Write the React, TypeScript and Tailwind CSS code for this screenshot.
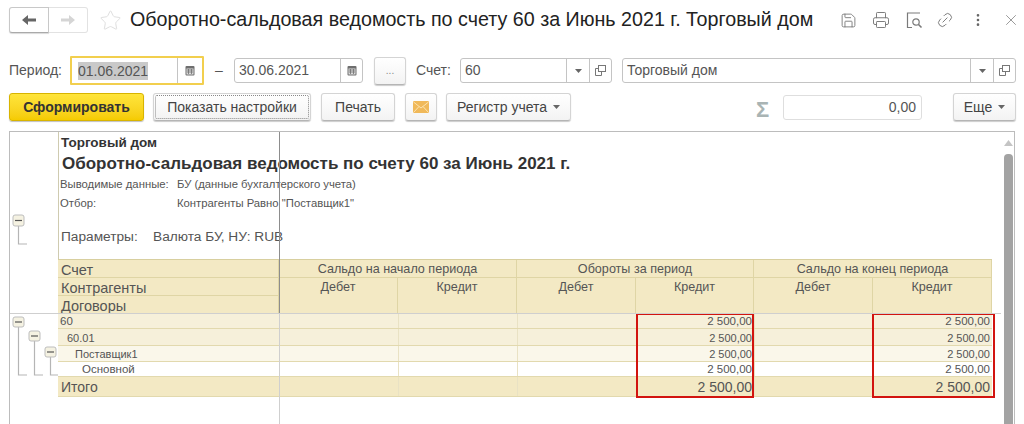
import { Link2, MoreVertical, Printer, Save, Star, X } from "lucide-react";
import type { ReactNode } from "react";

const font = "font-['Liberation_Sans',Arial,sans-serif]";

function Arrow({ left, color }: { left?: boolean; color: string }) {
  return (
    <svg width="16" height="12" viewBox="0 0 16 12" className={left ? "" : "rotate-180"}>
      <path d="M1 6 L7 1 V4.5 H15 V7.5 H7 V11 Z" fill={color} />
    </svg>
  );
}

function CalendarIcon() {
  return (
    <svg width="10" height="11" viewBox="0 0 10 11">
      <rect x="0.5" y="1" width="9" height="9.5" rx="1" fill="#6e6e6e" />
      <rect x="1.5" y="3.5" width="7" height="6" fill="#ddd" />
      <path d="M2 5H8M2 7H8M3.5 4V9M6.5 4V9" stroke="#6e6e6e" strokeWidth="0.8" />
    </svg>
  );
}

function CopyIcon() {
  return (
    <svg width="11" height="11" viewBox="0 0 11 11" fill="none" stroke="#777" strokeWidth="1">
      <rect x="3.5" y="0.5" width="7" height="6" fill="#fff" />
      <path d="M3.5 3.5H0.5V10.5H6.5V6.5" />
    </svg>
  );
}

function Caret({ color = "#666" }: { color?: string }) {
  return (
    <svg width="7" height="4" viewBox="0 0 7 4">
      <path d="M0 0H7L3.5 4Z" fill={color} />
    </svg>
  );
}

function Btn({ className = "", children }: { className?: string; children: ReactNode }) {
  return (
    <div
      className={`flex items-center justify-center h-[28px] rounded-[3px] border border-[#d4d4d4] border-b-[#b5b5b5] bg-gradient-to-b from-white to-[#f3f3f3] shadow-[0_1px_1px_rgba(0,0,0,0.2)] text-[14px] text-[#444] ${className}`}
    >
      {children}
    </div>
  );
}

function DateField({ value, selected, className = "" }: { value: string; selected?: boolean; className?: string }) {
  return (
    <div className={`flex items-stretch h-[25px] rounded-[3px] border border-[#c4c4c4] bg-white text-[14px] text-[#555] ${className}`}>
      <div className={`flex-1 flex items-center ${selected ? "pl-[6px]" : "pl-[4px]"}`}>
        <span className={selected ? "bg-[#c9c9c9] leading-[18px]" : ""}>{value}</span>
      </div>
      <div className={`${selected ? "w-[25px]" : "w-[22px]"} border-l border-[#c4c4c4] flex items-center justify-center`}>
        <CalendarIcon />
      </div>
    </div>
  );
}

function SelectField({ value, className = "" }: { value: string; className?: string }) {
  return (
    <div className={`flex items-stretch h-[25px] rounded-[3px] border border-[#c4c4c4] bg-white text-[14px] text-[#555] ${className}`}>
      <div className="flex-1 flex items-center pl-[4px]">{value}</div>
      <div className="w-[23px] border-l border-[#c4c4c4] flex items-center justify-center">
        <Caret />
      </div>
      <div className="w-[22px] border-l border-[#c4c4c4] flex items-center justify-center">
        <CopyIcon />
      </div>
    </div>
  );
}

function PreviewIcon() {
  return (
    <svg width="17" height="17" viewBox="0 0 17 17" fill="none" stroke="#7a7a7a" strokeWidth="1.2">
      <path d="M14 1H1.5V15.5H6" />
      <circle cx="10" cy="10" r="3.2" />
      <path d="M12.5 12.5L15.5 15.5" strokeWidth="1.6" />
    </svg>
  );
}

function TreeLines() {
  const boxes = [
    [12, 0],
    [28, 14],
    [44, 30],
  ];
  return (
    <svg width="48" height="292" viewBox="0 0 48 292" className="absolute left-0 top-0" fill="none">
      {/* координаты считаются от верхней границы отчета */}
      <path d="M8.5 94V112H17" stroke="#b5b5b5" strokeWidth="1.2" />
      <rect x="3" y="83" width="11" height="11" rx="2" fill="#f5f2e2" stroke="#bdbdbd" />
      <path d="M5 88.5H12" stroke="#555" strokeWidth="1.2" />
      {boxes.map(([x, y], i) => (
        <g key={x}>
          <path
            d={`M${x - 3.5} ${185 + y + 10}V243H${x + 5 + (i === 2 ? 3 : 0)}`}
            stroke="#b5b5b5"
            strokeWidth="1.2"
          />
          <rect x={x - 9} y={185 + y} width="11" height="10" rx="2" fill="#f5f2e2" stroke="#bdbdbd" />
          <path d={`M${x - 7} ${190 + y}H${x}`} stroke="#555" strokeWidth="1.2" />
        </g>
      ))}
    </svg>
  );
}

const rows = [
  { name: "60", h: "h-[15px]", bg: "bg-[#f6f0da]", pad: "pl-[2px]", size: "text-[11.5px]", top: "pt-[2px]" },
  { name: "60.01", h: "h-[17px]", bg: "bg-[#f6f0da]", pad: "pl-[9px]", size: "text-[11px]", top: "pt-[2px]" },
  { name: "Поставщик1", h: "h-[16px]", bg: "bg-[#faf7ea]", pad: "pl-[17px]", size: "text-[11px]", top: "pt-[1px]" },
  { name: "Основной", h: "h-[15px]", bg: "bg-white", pad: "pl-[24px]", size: "text-[11.5px]", top: "pt-[2px]" },
  { name: "Итого", h: "h-[20px]", bg: "bg-[#f3e9c4]", pad: "pl-[3px]", size: "text-[14px]", top: "pt-[1px]" },
];

const cols = "grid-cols-[221px_119px_119px_119px_118px_119px_119px]";
const hcell = "bg-[#f3e9c4] border-r border-b border-[#dfd5a5] text-[#555]";
const hlabel = `${hcell} pl-[3px] pt-[2px] text-[14.5px] flex items-center`;
const hgroup = `${hcell} col-span-2 pt-[1px] flex items-center justify-center`;

export default function App() {
  return (
    <div className={`${font} relative w-[1024px] h-[424px] overflow-hidden bg-white flex flex-col`}>
      {/* Заголовок окна */}
      <div className="flex items-center h-[26px] mt-[7px] pl-[9px] pr-[4px]">
        <div className="flex w-[79px] h-[26px]">
          <div className="w-[40px] flex items-center justify-center rounded-l-[3px] border border-[#c8c8c8] border-b-[#aaa] bg-white shadow-[0_1px_1px_rgba(0,0,0,0.15)]">
            <Arrow left color="#666" />
          </div>
          <div className="flex-1 flex items-center justify-center rounded-r-[3px] border border-l-0 border-[#e2e2e2] bg-white">
            <Arrow color="#d5d5d5" />
          </div>
        </div>
        <Star className="ml-[11px] text-[#dcdcdc]" size={23} strokeWidth={1} />
        <div className="ml-[8px] text-[19.7px] text-[#222] whitespace-nowrap leading-none">
          Оборотно-сальдовая ведомость по счету 60 за Июнь 2021 г. Торговый дом
        </div>
        <div className="ml-auto flex items-center text-[#7a7a7a]">
          <Save size={17} strokeWidth={1.3} />
          <Printer size={18} strokeWidth={1.3} className="ml-[15px]" />
          <div className="ml-[16px]">
            <PreviewIcon />
          </div>
          <Link2 size={18} strokeWidth={1.2} className="ml-[13px] -rotate-45" />
          <MoreVertical size={16} strokeWidth={2} className="ml-[16px] text-[#666]" />
          <X size={18} strokeWidth={1} className="ml-[16px]" />
        </div>
      </div>

      {/* Период и счет */}
      <div className="flex items-center mt-[23px] h-[29px] pl-[9px] text-[14px] text-[#555]">
        <span className="w-[61px]">Период:</span>
        <div className="w-[134px] h-[29px] border-2 border-[#f2cf4e] rounded-[1px] flex items-center">
          <DateField value="01.06.2021" selected className="w-full !h-[25px] !border-0" />
        </div>
        <span className="w-[30px] text-center">–</span>
        <DateField value="30.06.2021" className="w-[129px]" />
        <Btn className="ml-[11px] w-[32px] !text-[10px] !text-[#888]">...</Btn>
        <span className="ml-[10px] w-[44px]">Счет:</span>
        <SelectField value="60" className="w-[152px]" />
        <SelectField value="Торговый дом" className="ml-[10px] w-[394px]" />
      </div>

      {/* Командная панель */}
      <div className="flex items-center mt-[8px] h-[28px] pl-[9px] pr-[8px]">
        <div className="flex items-center justify-center w-[135px] h-[28px] rounded-[3px] border border-[#d8b400] bg-gradient-to-b from-[#ffe53a] to-[#f5cb00] shadow-[0_1px_1px_rgba(0,0,0,0.25)] text-[14px] font-bold text-[#333]">
          Сформировать
        </div>
        <Btn className="ml-[9px] w-[158px] p-[1px]">
          <div className="w-full h-full flex items-center justify-center border border-dotted border-[#888] rounded-[2px]">
            Показать настройки
          </div>
        </Btn>
        <Btn className="ml-[10px] w-[74px]">Печать</Btn>
        <Btn className="ml-[10px] w-[32px]">
          <svg width="16" height="12" viewBox="0 0 16 12">
            <rect width="16" height="12" rx="1" fill="#f0b95a" />
            <path d="M0.5 1L8 7L15.5 1M0.5 11.5L6 5.5M15.5 11.5L10 5.5" stroke="#fce3b0" strokeWidth="1" fill="none" />
          </svg>
        </Btn>
        <Btn className="ml-[9px] w-[125px] gap-[6px]">
          Регистр учета
          <Caret />
        </Btn>
        <span className="ml-[185px] w-[15px] pt-[5px] text-[22px] font-bold leading-none text-[#a9b4b4]">Σ</span>
        <div className="ml-[12px] w-[139px] h-[25px] rounded-[3px] border border-[#dedede] flex items-center justify-end pr-[5px] text-[14px] text-[#555]">
          0,00
        </div>
        <Btn className="ml-auto w-[63px] gap-[6px]">
          Еще
          <Caret />
        </Btn>
      </div>

      {/* Отчет */}
      <div className="relative flex-1 mt-[10px] ml-[9px] mr-[9px] border-t border-l border-r border-[#bcbcbc] flex min-h-0">
        <TreeLines />
        <div className="ml-[48px] flex flex-col w-[934px]">
          <div className="h-[127px] border-l border-[#cfcbb0] text-[#333]">
            <div className="pl-[2px] pt-[3px] text-[13.5px] leading-[15px] font-bold">Торговый дом</div>
            <div className="pl-[3px] mt-[4px] text-[17px] leading-[20px] font-bold">
              Оборотно-сальдовая ведомость по счету 60 за Июнь 2021 г.
            </div>
            <div className="flex mt-[4px] text-[11.3px] leading-[13px] text-[#555]">
              <span className="pl-[1px] w-[118px]">Выводимые данные:</span>
              <span>БУ (данные бухгалтерского учета)</span>
            </div>
            <div className="flex mt-[6px] text-[11.3px] leading-[13px] text-[#555]">
              <span className="pl-[1px] w-[118px]">Отбор:</span>
              <span>Контрагенты Равно "Поставщик1"</span>
            </div>
            <div className="flex mt-[19px] pl-[2px] text-[13.7px] leading-[16px] text-[#555]">
              <span className="w-[92px]">Параметры:</span>
              <span>Валюта БУ, НУ: RUB</span>
            </div>
          </div>

          <div className={`grid ${cols} grid-rows-[18px_18px_18px] border-t border-[#d8cf9f] text-[12.6px] leading-[16px]`}>
            <div className={hlabel}>Счет</div>
            <div className={hgroup}>Сальдо на начало периода</div>
            <div className={hgroup}>Обороты за период</div>
            <div className={hgroup}>Сальдо на конец периода</div>
            <div className={hlabel}>Контрагенты</div>
            {["Дебет", "Кредит", "Дебет", "Кредит", "Дебет", "Кредит"].map((t, i) => (
              <div key={i} className={`${hcell} row-span-2 pt-[1px] text-center`}>
                {t}
              </div>
            ))}
            <div className={hlabel}>Договоры</div>
          </div>

          <div className="relative">
            {rows.map((r) => (
              <div key={r.name} className={`grid ${cols} ${r.h} ${r.bg} border-b border-[#e2d9ae] text-[#555] ${r.size} leading-none`}>
                <div className={`flex items-center whitespace-nowrap ${r.pad} ${r.top}`}>{r.name}</div>
                {[0, 1, 2, 3, 4, 5].map((c) => (
                  <div key={c} className={`flex items-center justify-end pr-[2px] border-l border-[#e9e2c4] ${r.top}`}>
                    {c === 3 || c === 5 ? "2 500,00" : ""}
                  </div>
                ))}
              </div>
            ))}
            {/* Красные рамки поверх таблицы */}
            <div className="absolute left-[578px] top-[-1px] w-[118px] h-[85px] border-2 border-[#d2140f]" />
            <div className="absolute left-[814px] top-[-1px] w-[123px] h-[85px] border-2 border-[#d2140f]" />
          </div>
        </div>

        {/* Линия фиксации колонок и граница шапки */}
        <div className="absolute left-[269px] top-0 w-px h-[181px] bg-[#8d8d8d]" />
        <div className="absolute left-[269px] top-[181px] w-px h-[111px] bg-[#cfcfcf]" />
        <div className="absolute left-0 top-[181px] w-[991px] h-px bg-[#cfcfcf]" />

        {/* Прокрутка */}
        <svg width="9" height="6" viewBox="0 0 9 6" className="absolute left-[994px] top-[8px]">
          <path d="M0 6L4.5 0L9 6Z" fill="#c4c4c4" />
        </svg>
        <div className="absolute left-[994px] top-[22px] w-[9px] h-[280px] rounded-t-[4px] bg-[#a3a3a3]" />
      </div>
    </div>
  );
}
